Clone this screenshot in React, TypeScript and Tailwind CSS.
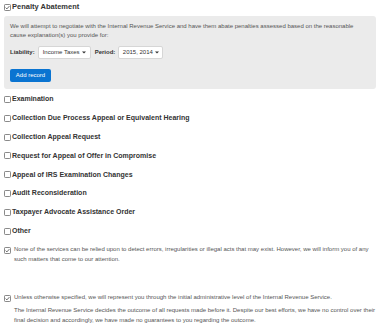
import React from "react";

function Box({ checked = false }: { checked?: boolean }) {
    return (
        <svg width="7" height="7" viewBox="0 0 7 7" className="shrink-0">
            <rect x="0.5" y="0.5" width="6" height="6" rx="0.8" fill="#fff" stroke="#6b6b6b" strokeWidth="0.8" />
            {checked && <path d="M1.6 3.6 L2.9 4.9 L5.4 2.1" fill="none" stroke="#444" strokeWidth="0.8" />}
        </svg>
    );
}

function Dropdown({ label, width }: { label: string; width: string }) {
    return (
        <div className={`${width} h-[13px] flex items-center justify-center gap-[2px] bg-white border border-[#d6d6d6] rounded-[2px] text-[6px] text-[#333]`}>
            <span>{label}</span>
            <svg width="4" height="3" viewBox="0 0 4 3">
                <path d="M0 0.5 L4 0.5 L2 2.5 Z" fill="#333" />
            </svg>
        </div>
    );
}

const services = [
    "Examination",
    "Collection Due Process Appeal or Equivalent Hearing",
    "Collection Appeal Request",
    "Request for Appeal of Offer in Compromise",
    "Appeal of IRS Examination Changes",
    "Audit Reconsideration",
    "Taxpayer Advocate Assistance Order",
    "Other",
];

export default function App() {
    return (
        <div className="w-[380px] h-[328px] bg-white overflow-hidden px-[4px] pt-[2px] text-[#555]" style={{ fontFamily: '"Liberation Sans", Arial, sans-serif' }}>
            <div className="flex items-center gap-[1px] h-[10px]">
                <Box checked />
                <span className="text-[7.5px] font-bold text-[#333]">Penalty Abatement</span>
            </div>

            <div className="mt-[4px] bg-[#ebebeb] rounded-[3px] px-[6px] pt-[6px] pb-[7px]">
                <p className="text-[6px] leading-[8.5px]">
                    We will attempt to negotiate with the Internal Revenue Service and have them abate penalties assessed based on the reasonable cause explanation(s) you provide for:
                </p>
                <div className="mt-[7px] flex items-center gap-[3px]">
                    <span className="text-[6px] font-bold text-[#333]">Liability:</span>
                    <Dropdown label="Income Taxes" width="w-[53px]" />
                    <span className="ml-[1px] text-[6px] font-bold text-[#333]">Period:</span>
                    <Dropdown label="2015, 2014" width="w-[45px]" />
                </div>
                <button className="mt-[10px] h-[13px] w-[41px] rounded-[2px] bg-[#0a74d1] text-white text-[6px] flex items-center justify-center">
                    Add record
                </button>
            </div>

            <div className="mt-[1px] flex flex-col">
                {services.map((s) => (
                    <div key={s} className="h-[18.85px] flex items-center gap-[1px]">
                        <Box />
                        <span className="text-[7px] font-bold text-[#333]">{s}</span>
                    </div>
                ))}
            </div>

            <div className="mt-[5px] flex gap-[3px]">
                <div className="pt-[1px]"><Box checked /></div>
                <p className="text-[6px] leading-[10px] -mt-[2px]">
                    None of the services can be relied upon to detect errors, irregularities or illegal acts that may exist. However, we will inform you of any such matters that come to our attention.
                </p>
            </div>

            <div className="mt-[30px] flex gap-[3px]">
                <div className="pt-[1px]"><Box checked /></div>
                <div className="-mt-[2px]">
                    <p className="text-[6px] leading-[10px]">
                        Unless otherwise specified, we will represent you through the initial administrative level of the Internal Revenue Service.
                    </p>
                    <p className="mt-[3px] text-[6px] leading-[10px]">
                        The Internal Revenue Service decides the outcome of all requests made before it. Despite our best efforts, we have no control over their final decision and accordingly, we have made no guarantees to you regarding the outcome.
                    </p>
                </div>
            </div>
        </div>
    );
}
